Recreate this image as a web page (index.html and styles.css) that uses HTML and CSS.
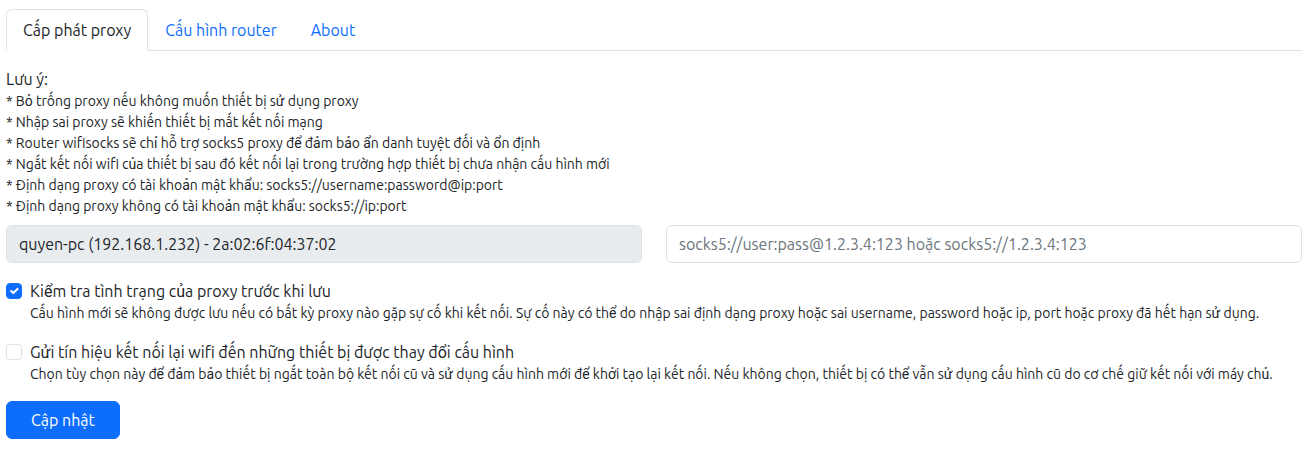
FILE: index.html
```html
<!DOCTYPE html>
<html lang="vi">
<head>
<meta charset="utf-8">
<title>Cấp phát proxy</title>
<link rel="stylesheet" href="styles.css">
</head>
<body>
<div class="page">
  <ul class="tabs">
    <li><a class="tab active" href="#">Cấp phát proxy</a></li>
    <li><a class="tab" href="#">Cấu hình router</a></li>
    <li><a class="tab" href="#">About</a></li>
  </ul>

  <div class="notes">
    <div class="notes-title">Lưu ý:</div>
    <div class="note">* Bỏ trống proxy nếu không muốn thiết bị sử dụng proxy</div>
    <div class="note">* Nhập sai proxy sẽ khiến thiết bị mất kết nối mạng</div>
    <div class="note">* Router wifisocks sẽ chỉ hỗ trợ socks5 proxy để đảm bảo ẩn danh tuyệt đối và ổn định</div>
    <div class="note">* Ngắt kết nối wifi của thiết bị sau đó kết nối lại trong trường hợp thiết bị chưa nhận cấu hình mới</div>
    <div class="note">* Định dạng proxy có tài khoản mật khẩu: socks5://username:password@ip:port</div>
    <div class="note">* Định dạng proxy không có tài khoản mật khẩu: socks5://ip:port</div>
  </div>

  <div class="fields">
    <input class="control disabled" type="text" value="quyen-pc (192.168.1.232) - 2a:02:6f:04:37:02" disabled>
    <input class="control" type="text" placeholder="socks5://user:pass@1.2.3.4:123 hoặc socks5://1.2.3.4:123">
  </div>

  <div class="check">
    <span class="box checked">
      <svg viewBox="0 0 20 20" width="16" height="16"><path d="M6 10l3 3l6-6" fill="none" stroke="#fff" stroke-width="3" stroke-linecap="round" stroke-linejoin="round"/></svg>
    </span>
    <div class="check-body">
      <div class="check-label">Kiểm tra tình trạng của proxy trước khi lưu</div>
      <div class="check-help">Cấu hình mới sẽ không được lưu nếu có bất kỳ proxy nào gặp sự cố khi kết nối. Sự cố này có thể do nhập sai định dạng proxy hoặc sai username, password hoặc ip, port hoặc proxy đã hết hạn sử dụng.</div>
    </div>
  </div>

  <div class="check">
    <span class="box"></span>
    <div class="check-body">
      <div class="check-label">Gửi tín hiệu kết nối lại wifi đến những thiết bị được thay đổi cấu hình</div>
      <div class="check-help">Chọn tùy chọn này để đảm bảo thiết bị ngắt toàn bộ kết nối cũ và sử dụng cấu hình mới để khởi tạo lại kết nối. Nếu không chọn, thiết bị có thể vẫn sử dụng cấu hình cũ do cơ chế giữ kết nối với máy chủ.</div>
    </div>
  </div>

  <button class="btn" type="button">Cập nhật</button>
</div>
</body>
</html>
```

FILE: styles.css
```css
* { box-sizing: border-box; }

body {
  margin: 0;
  font-family: Ubuntu, Roboto, "Liberation Sans", sans-serif;
  font-size: 16px;
  line-height: 1.5;
  color: #212529;
  background: #fff;
}

.page {
  padding: 9px 9px 0 6px;
}

.tabs {
  list-style: none;
  margin: 0;
  padding: 0;
  display: flex;
  border-bottom: 1px solid #dee2e6;
}

.tab {
  display: block;
  padding: 8px 16px;
  margin-bottom: -1px;
  border: 1px solid transparent;
  border-top-left-radius: 6px;
  border-top-right-radius: 6px;
  color: #0d6efd;
  text-decoration: none;
}

.tab.active {
  color: #212529;
  background: #fff;
  border-color: #dee2e6 #dee2e6 #fff;
}

.notes {
  margin-top: 16px;
}

.notes-title {
  font-size: 16px;
  line-height: 24px;
}

.note {
  font-size: 14px;
  line-height: 21px;
}

.fields {
  margin-top: 8px;
  display: grid;
  grid-template-columns: 1fr 1fr;
  column-gap: 24px;
}

.control {
  display: block;
  width: 100%;
  height: 38px;
  padding: 6px 12px;
  font: inherit;
  font-size: 16px;
  line-height: 24px;
  color: #212529;
  background: #fff;
  border: 1px solid #dee2e6;
  border-radius: 6px;
  outline: none;
}

.control::placeholder {
  color: #6c757d;
  opacity: 1;
}

.control.disabled {
  background: #e9ecef;
  color: #212529;
  -webkit-text-fill-color: #212529;
  opacity: 1;
}

.check {
  display: flex;
  margin-top: 16px;
}

.box {
  flex: none;
  width: 16px;
  height: 16px;
  margin-top: 4px;
  margin-right: 8px;
  border: 1px solid #dee2e6;
  border-radius: 4px;
  background: #fff;
  display: flex;
  align-items: center;
  justify-content: center;
}

.box.checked {
  background: #0d6efd;
  border-color: #0d6efd;
}

.box svg { display: block; }

.check-label {
  font-size: 16px;
  line-height: 24px;
}

.check-help {
  font-size: 14px;
  line-height: 21px;
}

.btn {
  display: inline-block;
  margin-top: 16px;
  height: 38px;
  padding: 6px 24px;
  font: inherit;
  font-size: 16px;
  line-height: 24px;
  color: #fff;
  background: #0d6efd;
  border: 1px solid #0d6efd;
  border-radius: 6px;
}
```
